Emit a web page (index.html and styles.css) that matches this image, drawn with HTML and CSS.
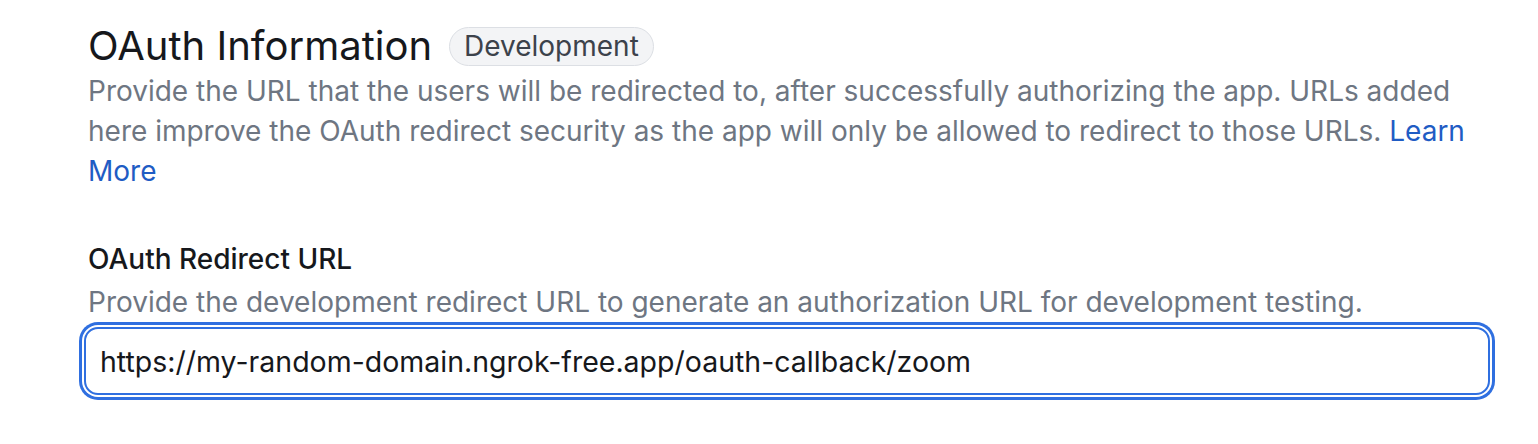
FILE: index.html
```html
<!DOCTYPE html>
<html lang="en">
<head>
    <meta charset="UTF-8">
    <meta name="viewport" content="width=device-width, initial-scale=1.0">
    <title>OAuth Information</title>
    <link rel="stylesheet" href="styles.css">
</head>
<body>
    <div class="section">
        <div class="section-header">
            <h2>OAuth Information</h2>
            <span class="badge">Development</span>
        </div>
        <p class="section-desc">Provide the URL that the users will be redirected to, after successfully authorizing the app. URLs added here improve the OAuth redirect security as the app will only be allowed to redirect to those URLs. <a href="#" class="link">Learn More</a></p>

        <div class="field">
            <label for="redirect-url" class="field-label">OAuth Redirect URL</label>
            <p class="field-hint">Provide the development redirect URL to generate an authorization URL for development testing.</p>
            <input type="text" id="redirect-url" class="text-input" value="https://my-random-domain.ngrok-free.app/oauth-callback/zoom">
        </div>
    </div>
</body>
</html>
```

FILE: styles.css
```css
body {
    font-family: Inter, "Noto Sans", sans-serif;
    margin: 0;
    background-color: #ffffff;
}
.section {
    width: 1406px;
    padding: 21px 0 40px 88px;
}
.section-header {
    display: flex;
    align-items: center;
    gap: 17px;
}
h2 {
    margin: 0;
    font-size: 40px;
    font-weight: 400;
    color: #16181c;
    line-height: 50px;
}
.badge {
    display: inline-block;
    padding: 1px 14px 2px;
    font-size: 28px;
    line-height: 34px;
    color: #3c424b;
    background-color: #f3f4f6;
    border: 1px solid #dcdfe4;
    border-radius: 20px;
}
.section-desc {
    margin: 0;
    font-size: 28px;
    line-height: 40px;
    color: #6e7682;
    width: 1390px;
}
.link {
    color: #1f5cc4;
    text-decoration: none;
}
.field {
    margin-top: 48px;
    display: flex;
    flex-direction: column;
}
.field-label {
    font-size: 28px;
    font-weight: 500;
    line-height: 40px;
    color: #16181c;
}
.field-hint {
    margin: 3px 0 0;
    font-size: 28px;
    line-height: 40px;
    color: #6e7682;
}
.text-input {
    margin: 5px 0 0 -4px;
    width: 1406px;
    height: 68px;
    box-sizing: border-box;
    padding: 0 14px;
    font-family: Inter, "Noto Sans", sans-serif;
    font-size: 28.5px;
    color: #16181c;
    border: 2px solid #2f6fe0;
    border-radius: 14px;
    outline: none;
    box-shadow: 0 0 0 2px #ffffff, 0 0 0 5px #2f6fe0;
}
```
